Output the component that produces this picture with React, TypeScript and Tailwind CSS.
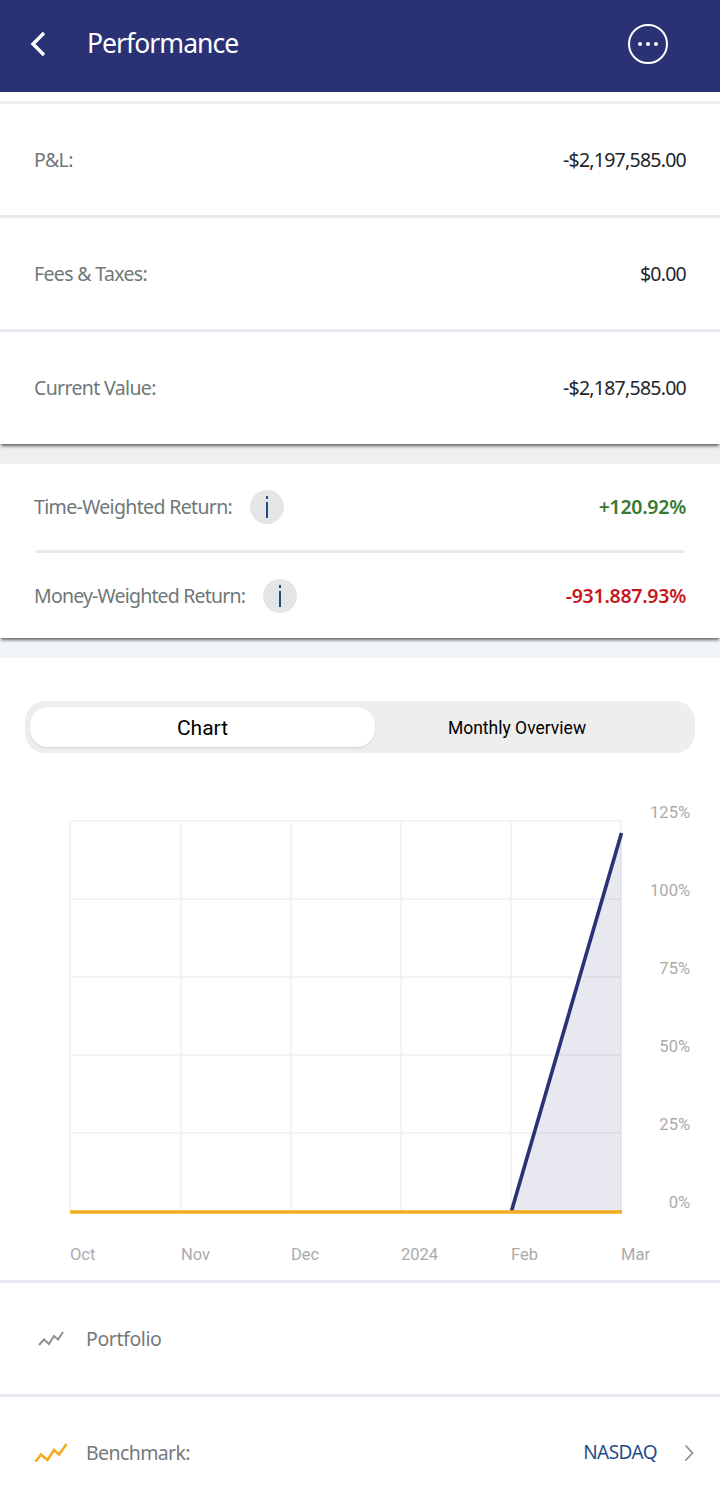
import React from "react";

const body = "font-['Noto_Sans',sans-serif]";

function InfoDot() {
  return (
    <span className="flex h-[34px] w-[34px] shrink-0 items-center justify-center rounded-full bg-[#e4e5e7]">
      <svg width="4" height="24" viewBox="0 0 4 24">
        <rect x="1" y="1" width="2" height="3" fill="#1f4d82" />
        <rect x="1" y="7" width="2" height="16" fill="#1f4d82" />
      </svg>
    </span>
  );
}

function ValueRow({ label, value, raised }: { label: string; value: string; raised?: boolean }) {
  const frame = raised
    ? "z-10 h-[112px] bg-white pb-[1px] shadow-[0_3px_3px_-1px_rgba(0,0,0,0.6)]"
    : "h-[111px]";
  return (
    <div className={`flex shrink-0 items-center justify-between pl-[34px] pr-[34px] ${frame}`}>
      <span className="text-[19.5px] tracking-[-0.65px] text-[#6f7778]">{label}</span>
      <span className="text-[19.5px] tracking-[-0.75px] text-[#20262b]">{value}</span>
    </div>
  );
}

function ReturnRow({ label, value, color, labelClass }: { label: string; value: string; color: string; labelClass: string }) {
  return (
    <div className="flex flex-1 items-center justify-between pl-[34px] pr-[34px]">
      <span className={`flex items-center ${labelClass}`}>
        <span className="text-[19.5px] text-[#6f7778]">{label}</span>
        <InfoDot />
      </span>
      <span className={`text-[19.5px] font-semibold tracking-[-0.25px] ${color}`}>{value}</span>
    </div>
  );
}

function Chart() {
  const xs = [70, 181, 291, 401, 511, 621];
  const ys = [821, 899, 977, 1055, 1133, 1211];
  const yLabels = ["125%", "100%", "75%", "50%", "25%", "0%"];
  const xLabels = ["Oct", "Nov", "Dec", "2024", "Feb", "Mar"];
  return (
    <svg width="720" height="527" viewBox="0 753 720 527" className="block shrink-0">
      {xs.map((x) => (
        <line key={x} x1={x} y1={821} x2={x} y2={1211} stroke="#f0f0f2" strokeWidth="1.4" />
      ))}
      {ys.map((y) => (
        <line key={y} x1={70} y1={y} x2={621} y2={y} stroke="#f0f0f2" strokeWidth="1.4" />
      ))}
      <polygon points="511,1211 621.5,833 621.5,1211" fill="#2a3275" fillOpacity="0.11" />
      <line x1="511.5" y1="1211" x2="621.5" y2="833" stroke="#2a3275" strokeWidth="3.6" />
      <line x1="70" y1="1212" x2="622" y2="1212" stroke="#f3ac1f" strokeWidth="3.5" />
      {yLabels.map((t, i) => (
        <text key={t} x="690" y={ys[i] - 2.6} textAnchor="end" fontFamily="Roboto, sans-serif" fontSize="16.5" fill="#ababab">
          {t}
        </text>
      ))}
      {xLabels.map((t, i) => (
        <text key={t} x={xs[i]} y="1259.5" fontFamily="Roboto, sans-serif" fontSize="16.5" fill="#ababab">
          {t}
        </text>
      ))}
    </svg>
  );
}

function Spark({ color, big }: { color: string; big?: boolean }) {
  return big ? (
    <svg width="34" height="22" viewBox="0 0 34 22" fill="none">
      <path d="M1.5 19.5 L7 12.5 L13.5 18 L20 8 L25 12.5 L32.5 2" stroke={color} strokeWidth="2.6" />
    </svg>
  ) : (
    <svg width="26" height="17" viewBox="0 0 26 17" fill="none">
      <path d="M1 15 L6 9.5 L11 14 L16 6 L20 9.5 L25 2" stroke={color} strokeWidth="2" />
    </svg>
  );
}

export default function App() {
  return (
    <div className={`flex h-[1492px] w-[720px] flex-col overflow-hidden bg-white ${body}`}>
      <header className="flex h-[92px] shrink-0 items-center bg-[#2a3275] pb-[4px] pl-[30px] pr-[52px]">
        <svg width="16" height="26" viewBox="0 0 16 26" fill="none">
          <path d="M14 2 L3 13 L14 24" stroke="#fff" strokeWidth="3.4" />
        </svg>
        <span className="ml-[41px] flex-1 text-[26.5px] tracking-[-0.95px] text-white">Performance</span>
        <span className="flex h-[40px] w-[40px] items-center justify-center gap-[4px] rounded-full border-[2.5px] border-white">
          <i className="h-[4px] w-[4px] rounded-full bg-white" />
          <i className="h-[4px] w-[4px] rounded-full bg-white" />
          <i className="h-[4px] w-[4px] rounded-full bg-white" />
        </span>
      </header>

      <div className="mt-[9px] h-[3px] shrink-0 bg-[#eef0f5]" />
      <ValueRow label="P&L:" value="-$2,197,585.00" />
      <div className="h-[3px] shrink-0 bg-[#e8e9f1]" />
      <ValueRow label="Fees & Taxes:" value="$0.00" />
      <div className="h-[3px] shrink-0 bg-[#e8e9f1]" />
      <ValueRow label="Current Value:" value="-$2,187,585.00" raised />

      <div className="h-[20px] shrink-0 bg-[#efefef]" />

      <section className="z-10 flex h-[174px] shrink-0 flex-col bg-white shadow-[0_3px_3px_-1px_rgba(0,0,0,0.6)]">
        <div className="flex h-[86px] items-center">
          <ReturnRow label="Time-Weighted Return:" value="+120.92%" color="text-[#357a2e]" labelClass="gap-[18px] tracking-[-0.65px]" />
        </div>
        <div className="mx-[36px] h-[3px] bg-[#e8e9f1]" />
        <div className="flex flex-1 items-center">
          <ReturnRow label="Money-Weighted Return:" value="-931.887.93%" color="text-[#c8161d]" labelClass="gap-[18px] tracking-[-0.8px]" />
        </div>
      </section>
      <div className="h-[20px] shrink-0 bg-[#f1f4f8]" />

      <div className="mx-[25px] mt-[43px] flex h-[52px] shrink-0 items-center rounded-[20px] bg-[#eeeeee] pl-[5px] font-['Roboto',sans-serif] text-black">
        <div className="flex h-[40px] w-[345px] items-center justify-center rounded-[18px] bg-white pt-[3px] text-[21px] shadow-[0_1px_2px_rgba(0,0,0,0.12)]">
          Chart
        </div>
        <div className="flex flex-1 items-center justify-center pr-[36px] pt-[2px] text-[17.5px]">Monthly Overview</div>
      </div>

      <Chart />

      <div className="h-[3px] shrink-0 bg-[#e8e9f1]" />
      <div className="flex h-[111px] shrink-0 items-center pl-[38px]">
        <Spark color="#8d8f92" />
        <span className="ml-[22px] text-[19.5px] tracking-[-0.4px] text-[#75797c]">Portfolio</span>
      </div>
      <div className="h-[3px] shrink-0 bg-[#e8e9f1]" />
      <div className="flex h-[111px] shrink-0 items-center pl-[34px] pr-[26px]">
        <Spark color="#f3ac1f" big />
        <span className="ml-[18px] flex-1 text-[19.5px] tracking-[-0.6px] text-[#75797c]">Benchmark:</span>
        <span className="text-[19px] tracking-[-0.55px] text-[#1f4d8c]">NASDAQ</span>
        <svg className="ml-[27px]" width="10" height="18" viewBox="0 0 10 18" fill="none">
          <path d="M1.5 1.5 L8.5 9 L1.5 16.5" stroke="#8d9094" strokeWidth="1.8" />
        </svg>
      </div>
    </div>
  );
}
